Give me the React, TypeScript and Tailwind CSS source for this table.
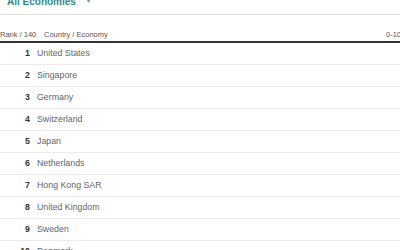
import React from 'react';

const rows = [
  'United States',
  'Singapore',
  'Germany',
  'Switzerland',
  'Japan',
  'Netherlands',
  'Hong Kong SAR',
  'United Kingdom',
  'Sweden',
  'Denmark',
];

export default function App() {
  return (
    <div className="w-[400px] h-[250px] overflow-hidden bg-white font-['Liberation_Sans',Arial,sans-serif]">
      <div className="-mt-[9px] h-[24px] flex items-center pl-[7px] pb-[2px] border-b border-[#e2e2e2] text-[10px] font-bold text-[#2e8b8a]">
        <span>All Economies</span>
        <span className="ml-[9px] text-[7px] text-[#5a9f9c]">▼</span>
      </div>
      <div className="h-[28px] flex items-end pb-[1px] border-b-2 border-[#333] text-[7.5px] text-[#555] whitespace-nowrap">
        <span className="w-[44px]">Rank / 140</span>
        <span className="flex-1">Country / Economy</span>
        <span className="-mr-[8px] w-[22px]">0-10</span>
      </div>
      {rows.map((name, i) => (
        <div key={name} className="h-[22px] flex items-center border-b border-[#ececec] text-[8.8px]">
          <span className="w-[31px] text-right pr-[1px] text-[#333] font-bold">{i + 1}</span>
          <span className="ml-[6px] text-[#666]">{name}</span>
        </div>
      ))}
    </div>
  );
}
